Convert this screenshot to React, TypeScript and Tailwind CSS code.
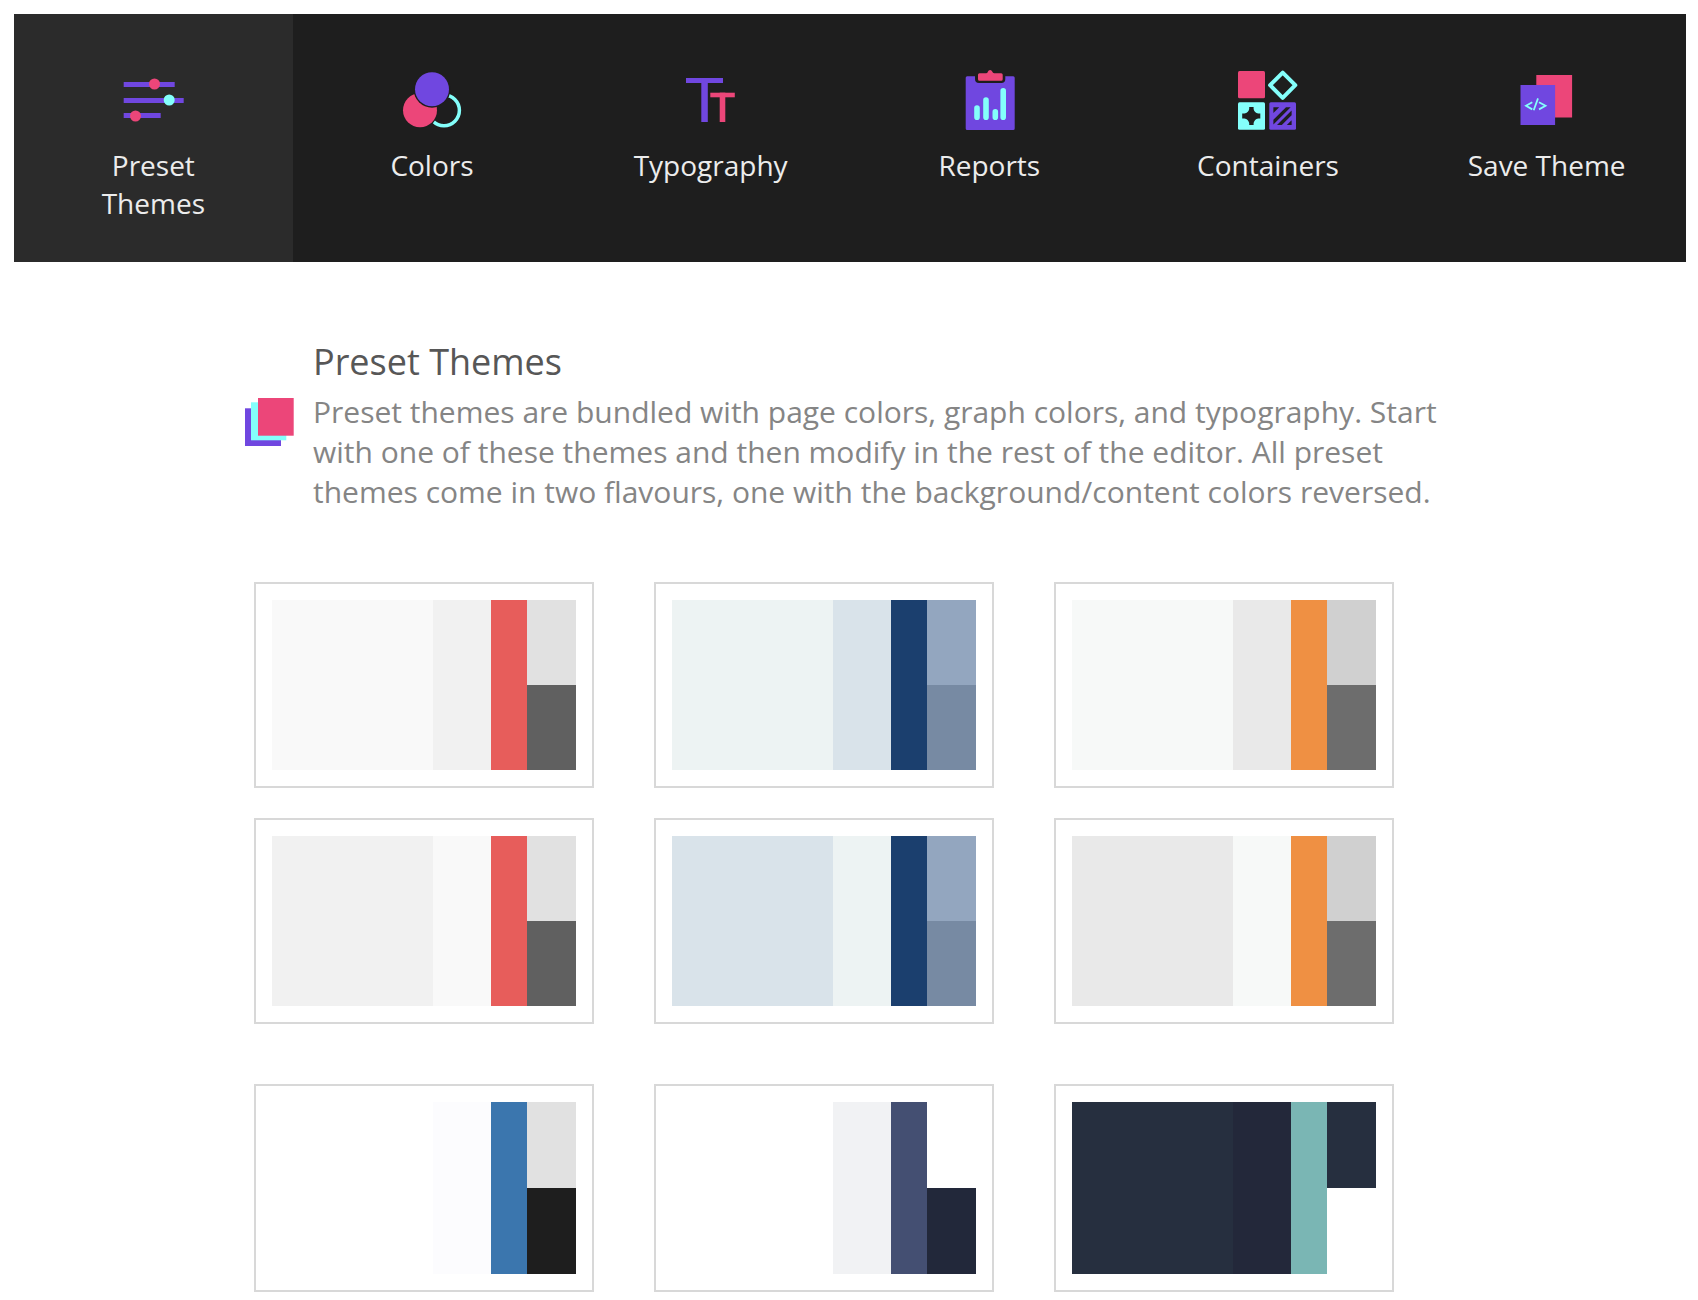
import React from "react";

const PresetIcon = () => (
  <svg className="size-16" viewBox="0 0 64 64" aria-hidden="true">
    <g fill="#7047e0">
      <rect x="2.7" y="14" width="51" height="5" />
      <rect x="2.7" y="30" width="60" height="5" />
      <rect x="2.7" y="45" width="37" height="5" />
    </g>
    <circle cx="33.5" cy="16" r="5.5" fill="#ec4679" />
    <circle cx="48.2" cy="32" r="5.5" fill="#84fffb" />
    <circle cx="14.5" cy="48" r="5.5" fill="#ec4679" />
  </svg>
);

const ColorsIcon = () => (
  <svg className="size-16" viewBox="0 0 64 64" aria-hidden="true">
    <circle cx="44" cy="42.3" r="15.4" fill="none" stroke="#84fffb" strokeWidth="3.5" />
    <circle cx="20" cy="42.3" r="18.2" fill="#1e1e1e" />
    <circle cx="20" cy="42.3" r="17" fill="#ec4679" />
    <circle cx="32" cy="21.3" r="18.4" fill="#1e1e1e" />
    <circle cx="32" cy="21.3" r="17" fill="#7047e0" />
  </svg>
);

const TypographyIcon = () => (
  <svg className="size-16" viewBox="0 0 64 64" aria-hidden="true">
    <g fill="#7047e0">
      <rect x="7" y="10" width="37" height="5" />
      <rect x="22.3" y="10" width="6.5" height="44" />
    </g>
    <g fill="#ec4679">
      <rect x="31.3" y="24.7" width="24.5" height="4.6" />
      <rect x="40.7" y="24.7" width="5.6" height="29.3" />
    </g>
  </svg>
);

const ReportsIcon = () => (
  <svg className="size-16" viewBox="0 0 64 64" aria-hidden="true">
    <path
      fill="#7047e0"
      d="M10.2 8.3H18V11a4 4 0 0 0 4 4H44.3a4 4 0 0 0 4-4V8.3H56.2a1.5 1.5 0 0 1 1.5 1.5V60.5a1.5 1.5 0 0 1-1.5 1.5H10.2a1.5 1.5 0 0 1-1.5-1.5V9.8a1.5 1.5 0 0 1 1.5-1.5Z"
    />
    <path
      fill="#ec4679"
      d="M22.5 5.3H29.3Q30.6 5 31 3.6A2.2 2.2 0 0 1 35.2 3.6Q35.8 5 37.2 5.3H44.2a1.5 1.5 0 0 1 1.5 1.5V11.2a1.5 1.5 0 0 1-1.5 1.5H22.5a1.5 1.5 0 0 1-1.5-1.5V6.8a1.5 1.5 0 0 1 1.5-1.5Z"
    />
    <g stroke="#84fffb" strokeWidth="5.6" strokeLinecap="round">
      <path d="M20 40V49.2M29 32V49.2M38.3 43.8V49.2M46.2 22.8V49.2" />
    </g>
  </svg>
);

const ContainersIcon = () => (
  <svg className="size-16" viewBox="0 0 64 64" aria-hidden="true">
    <rect x="2" y="3" width="27" height="27.3" rx="1.5" fill="#ec4679" />
    <path d="M46.7 4.6 59.3 17.2 46.7 29.8 34.1 17.2Z" fill="none" stroke="#84fffb" strokeWidth="4" strokeLinejoin="round" />
    <rect x="2" y="34.3" width="27" height="27.4" rx="1.5" fill="#84fffb" />
    <path
      fill="#1e1e1e"
      d="M13.2 39H17.6V41Q18.4 44.8 22.2 45.6H24.3V50.4H22.2Q18.4 51.2 17.6 55V57H13.2V55Q12.4 51.2 8.4 50.4H6.2V45.6H8.4Q12.4 44.8 13.2 41Z"
    />
    <rect x="33.3" y="34.3" width="26.7" height="27.4" rx="1.5" fill="#7047e0" />
    <g fill="#1e1e1e">
      <path d="M37.4 39.2H43.2L37.4 45Z" />
      <path d="M50 39.2H54.6L37.4 56.4V51.8Z" />
      <path d="M55.6 42.4V47.2L45.8 57H41Z" />
      <path d="M55.6 52.2V57H50.8Z" />
    </g>
  </svg>
);

const SaveIcon = () => (
  <svg className="size-16" viewBox="0 0 64 64" aria-hidden="true">
    <rect x="21.3" y="7" width="35.8" height="42.5" fill="#ec4679" />
    <rect x="5.5" y="17" width="34.6" height="40" fill="#7047e0" />
    <path
      d="M17.3 34.2 11 37.8 17.3 41.4M23 30.4 18.7 42.3M24 34.2 30.5 37.8 24 41.4"
      fill="none"
      stroke="#84fffb"
      strokeWidth="1.8"
    />
  </svg>
);

const tabs = [
  { label: "Preset Themes", Icon: PresetIcon },
  { label: "Colors", Icon: ColorsIcon },
  { label: "Typography", Icon: TypographyIcon },
  { label: "Reports", Icon: ReportsIcon },
  { label: "Containers", Icon: ContainersIcon },
  { label: "Save Theme", Icon: SaveIcon },
];

type Theme = { name: string; colors: [string, string, string, string, string] };

const lightThemes: Theme[] = [
  { name: "Coral", colors: ["bg-[#f9f9f9]", "bg-[#f1f1f1]", "bg-[#e75d5b]", "bg-[#e1e1e1]", "bg-[#606060]"] },
  { name: "Navy", colors: ["bg-[#edf3f3]", "bg-[#d9e3ea]", "bg-[#1b3f6e]", "bg-[#93a6bf]", "bg-[#778aa3]"] },
  { name: "Orange", colors: ["bg-[#f7f9f8]", "bg-[#e9e9e9]", "bg-[#ef9043]", "bg-[#d0d0d0]", "bg-[#6d6d6d]"] },
  { name: "Coral reversed", colors: ["bg-[#f1f1f1]", "bg-[#f9f9f9]", "bg-[#e75d5b]", "bg-[#e1e1e1]", "bg-[#606060]"] },
  { name: "Navy reversed", colors: ["bg-[#d9e3ea]", "bg-[#edf3f3]", "bg-[#1b3f6e]", "bg-[#93a6bf]", "bg-[#778aa3]"] },
  { name: "Orange reversed", colors: ["bg-[#e9e9e9]", "bg-[#f7f9f8]", "bg-[#ef9043]", "bg-[#d0d0d0]", "bg-[#6d6d6d]"] },
];

const contrastThemes: Theme[] = [
  { name: "Blue", colors: ["bg-white", "bg-[#fcfcfe]", "bg-[#3b76ae]", "bg-[#e1e1e1]", "bg-[#1e1e1e]"] },
  { name: "Indigo", colors: ["bg-white", "bg-[#f1f2f4]", "bg-[#444f72]", "bg-white", "bg-[#22283a]"] },
  { name: "Midnight", colors: ["bg-[#262f3f]", "bg-[#23283a]", "bg-[#7ab6b4]", "bg-[#262f3f]", "bg-white"] },
];

function ThemeCard({ theme, height }: { theme: Theme; height: string }) {
  const [background, content, accent, light, dark] = theme.colors;
  return (
    <button type="button" aria-label={theme.name} className="block cursor-pointer border-2 border-[#d8d8d8] bg-white p-4">
      <span className={`grid grid-cols-[53fr_19fr_12fr_16fr] ${height}`}>
        <span className={background} />
        <span className={content} />
        <span className={accent} />
        <span className="grid grid-rows-2">
          <span className={light} />
          <span className={dark} />
        </span>
      </span>
    </button>
  );
}

export default function App() {
  return (
    <div className="bg-white pt-3.5 pr-3 pb-2 pl-3.5 font-['Open_Sans',sans-serif]">
      <nav aria-label="Theme editor" className="grid grid-cols-6 bg-[#1e1e1e]">
        {tabs.map(({ label, Icon }, index) => (
          <button
            key={label}
            type="button"
            aria-current={index === 0 ? "page" : undefined}
            className={`flex cursor-pointer flex-col items-center gap-3.5 px-10 pt-[54px] pb-10 text-[28px] leading-[38px] text-[#ececec] ${
              index === 0 ? "bg-[#2b2b2b]" : "bg-[#1e1e1e]"
            }`}
          >
            <Icon />
            <span className={index === 0 ? "max-w-[140px]" : "whitespace-nowrap"}>{label}</span>
          </button>
        ))}
      </nav>

      <main className="mx-auto max-w-[1210px] pt-[70px]">
        <header className="flex items-center gap-[19px]">
          <svg className="h-12 w-[49px] shrink-0" viewBox="0 0 49 48" aria-hidden="true">
            <rect x="0" y="10.3" width="36" height="37.7" fill="#7047e0" />
            <rect x="6" y="4.3" width="35.3" height="38" fill="#84fffb" />
            <rect x="13" y="0" width="35.7" height="37.7" fill="#ec4679" />
          </svg>
          <div>
            <h1 className="text-[36px] leading-[60px] text-[#575757]">Preset Themes</h1>
            <p className="text-[30px] leading-10 text-[#858585]">
              Preset themes are bundled with page colors, graph colors, and typography. Start with one of these themes
              and then modify in the rest of the editor. All preset themes come in two flavours, one with the
              background/content colors reversed.
            </p>
          </div>
        </header>

        <div className="ml-[9px] flex max-w-[1140px] flex-col gap-[60px] pt-[70px]">
          <section aria-label="Light themes" className="grid grid-cols-3 gap-x-[60px] gap-y-[30px]">
            {lightThemes.map((theme) => (
              <ThemeCard key={theme.name} theme={theme} height="h-[170px]" />
            ))}
          </section>
          <section aria-label="Contrast themes" className="grid grid-cols-3 gap-x-[60px]">
            {contrastThemes.map((theme) => (
              <ThemeCard key={theme.name} theme={theme} height="h-[172px]" />
            ))}
          </section>
        </div>
      </main>
    </div>
  );
}
